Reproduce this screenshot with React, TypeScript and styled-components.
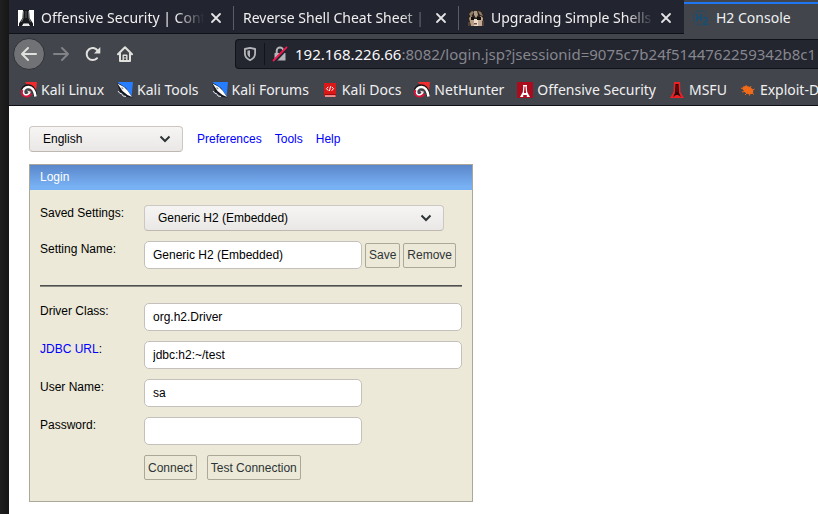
import React from "react";
import styled, { createGlobalStyle } from "styled-components";

const GlobalStyle = createGlobalStyle`
  *, *::before, *::after { box-sizing: border-box; }
  body { margin: 0; background: #ffffff; }
`;

const uiFont = `"Noto Sans", sans-serif`;
const pageFont = `"Liberation Sans", Arial, sans-serif`;

const Desktop = styled.div`
  display: flex;
  min-height: 100vh;
`;
const Edge = styled.div`
  flex: 0 0 9px;
  background: linear-gradient(90deg, #202020, #161616);
`;
const Window = styled.div`
  flex: 1;
  min-width: 0;
  display: flex;
  flex-direction: column;
`;
const Chrome = styled.header`
  overflow: hidden;
  background: #42454c;
  border-bottom: 1px solid #0f1014;
  font: 14px/20px ${uiFont};
  color: #f0f0f1;
`;

/* Tab strip */
const TabStrip = styled.div`
  display: flex;
  height: 34px;
  background: #22242f;
`;
const Tab = styled.div<{ $active?: boolean; $divided?: boolean }>`
  flex: 0 0 225px;
  min-width: 0;
  display: flex;
  align-items: center;
  gap: 7px;
  padding: 2px 9px 0;
  position: relative;
  background: ${(p) => (p.$active ? "#42454c" : "transparent")};
  border-bottom: 1px solid ${(p) => (p.$active ? "#42454c" : "#0f1118")};
  svg {
    flex: none;
  }
  &::before {
    content: "";
    position: absolute;
    left: 0;
    right: 0;
    top: 2px;
    height: ${(p) => (p.$active ? "2px" : "0")};
    background: #1f76f2;
  }
  &::after {
    content: "";
    position: absolute;
    right: 0;
    top: 6px;
    bottom: 3px;
    width: ${(p) => (p.$divided ? "1px" : "0")};
    background: #5c5e66;
  }
`;
const TabTitle = styled.span<{ $fade?: boolean }>`
  flex: 1;
  min-width: 0;
  margin-right: -4px;
  overflow: hidden;
  white-space: nowrap;
  mask-image: ${(p) =>
    p.$fade ? "linear-gradient(90deg, #000 calc(100% - 28px), transparent)" : "none"};
`;
const TabClose = styled.button`
  display: flex;
  padding: 3px;
  border: 0;
  background: none;
  color: #e4e4e6;
`;

/* Navigation */
const NavBar = styled.nav`
  display: flex;
  align-items: center;
  height: 40px;
  padding-left: 4px;
`;
const NavButton = styled.button<{ $round?: boolean; $dim?: boolean }>`
  flex: 0 0 32px;
  height: 32px;
  display: flex;
  align-items: center;
  justify-content: center;
  padding: 0;
  border: ${(p) => (p.$round ? "1px solid #2f3137" : "0")};
  border-radius: 50%;
  background: ${(p) => (p.$round ? "#717276" : "transparent")};
  color: ${(p) => (p.$dim ? "#808286" : "#e0e0dc")};
`;
const AddressBar = styled.div`
  flex: 1;
  min-width: 0;
  display: flex;
  align-items: center;
  height: 30px;
  margin-left: 94px;
  padding-left: 6px;
  background: #23252f;
  border: 1px solid #111318;
  border-right: 0;
  border-radius: 4px 0 0 4px;
  font-size: 15px;
`;
const AddressIcon = styled.span<{ $divided?: boolean }>`
  flex: none;
  display: flex;
  align-items: center;
  height: 22px;
  padding-right: ${(p) => (p.$divided ? "6px" : "0")};
  margin-right: 7px;
  border-right: ${(p) => (p.$divided ? "1px solid #111318" : "0")};
`;
const Host = styled.label`
  color: #f9f9fa;
`;
const AddressInput = styled.input`
  flex: 1;
  min-width: 0;
  padding: 0;
  border: 0;
  outline: 0;
  background: none;
  font: inherit;
  color: #86878e;
`;

/* Bookmarks */
const Bookmarks = styled.nav`
  display: flex;
  align-items: center;
  gap: 13px;
  height: 31px;
  padding: 0 0 0 12px;
`;
const Bookmark = styled.a`
  flex: none;
  display: flex;
  align-items: center;
  gap: 4px;
  color: #f0f0f1;
  text-decoration: none;
  white-space: nowrap;
`;

/* Page */
const Page = styled.main`
  flex: 1;
  padding: 20px 20px 12px;
  background: #ffffff;
  color: #000000;
  font: 12px/16px ${pageFont};
`;
const TopRow = styled.div`
  display: flex;
  align-items: center;
  gap: 14px;
  margin-bottom: 12px;
`;
const Links = styled.nav`
  display: flex;
  gap: 13px;
`;
const Link = styled.a`
  color: #0000ff;
  text-decoration: none;
`;
const SelectBox = styled.div<{ $width: number }>`
  position: relative;
  width: ${(p) => p.$width}px;
  max-width: 100%;
  svg {
    position: absolute;
    right: 12px;
    top: 9px;
    pointer-events: none;
  }
`;
const Select = styled.select`
  display: block;
  appearance: none;
  width: 100%;
  height: 26px;
  padding: 0 30px 0 13px;
  border: 1px solid #cdc7c2;
  border-bottom-color: #bfb8b1;
  border-radius: 4px;
  background: linear-gradient(#f6f5f4, #eae8e6);
  color: #000000;
  font: inherit;
`;
const Panel = styled.form`
  max-width: 444px;
  background: #ece9d8;
  border: 1px solid #aca899;
`;
const PanelTitle = styled.h1`
  margin: 0;
  padding: 4px 10px 5px;
  background: linear-gradient(#5a87ca, #78b0f4 85%);
  color: #ffffff;
  font: inherit;
`;
const Fields = styled.div`
  display: flex;
  flex-direction: column;
  gap: 10px;
  padding: 15px 10px 21px;
`;
const Row = styled.div`
  display: grid;
  grid-template-columns: 104px minmax(0, 1fr);
  align-items: start;
`;
const Controls = styled.div<{ $gap?: number }>`
  display: flex;
  align-items: center;
  gap: ${(p) => p.$gap ?? 3}px;
`;
const TextInput = styled.input<{ $wide?: boolean }>`
  width: ${(p) => (p.$wide ? "100%" : "218px")};
  height: 28px;
  padding: 0 8px;
  border: 1px solid #c4c1bd;
  border-radius: 5px;
  background: #ffffff;
  color: #000000;
  font: inherit;
`;
const Button = styled.button`
  height: 25px;
  padding: 0 3px;
  border: 1px solid #aca899;
  border-radius: 2px;
  background: #ece9d8;
  color: #2e3436;
  font: inherit;
  white-space: nowrap;
`;
const Rule = styled.hr`
  width: 100%;
  height: 2px;
  margin: 6px 0;
  border: 0;
  border-top: 1px solid #4f4f4f;
  background: #8a8982;
`;

const Chevron = () => (
  <svg width="12" height="8" viewBox="0 0 12 8" fill="none" stroke="#2e3436" strokeWidth="2">
    <path d="M1.5 1.5 6 6l4.5-4.5" />
  </svg>
);
const CloseIcon = () => (
  <svg width="12" height="12" viewBox="0 0 12 12" stroke="currentColor" strokeWidth="1.8" strokeLinecap="round">
    <path d="m2 2 8 8M10 2l-8 8" />
  </svg>
);
const ArrowIcon = ({ flip }: { flip?: boolean }) => (
  <svg width="16" height="16" viewBox="0 0 16 16" fill="none" stroke="currentColor" strokeWidth="2" strokeLinecap="round" strokeLinejoin="round">
    <path d={flip ? "M1 8h14M9 2l6 6-6 6" : "M15 8H1M7 2 1 8l6 6"} />
  </svg>
);
const ReloadIcon = () => (
  <svg width="16" height="16" viewBox="0 0 16 16">
    <path d="M12 12.2A6 6 0 1 1 12.6 4.6" fill="none" stroke="currentColor" strokeWidth="2" strokeLinecap="round" />
    <path d="M15.3 1v6.5H9z" fill="currentColor" />
  </svg>
);
const HomeIcon = () => (
  <svg width="16" height="16" viewBox="0 0 16 16" fill="none" stroke="currentColor" strokeWidth="2" strokeLinejoin="round" strokeLinecap="round">
    <path d="M1 8.2 8 1.3l7 6.9M3 7.5V15h10V7.5" />
    <path d="M6.2 14.5V9.2h3.6v5.3" strokeWidth="1.4" />
    <path d="M8 11.5v1" strokeWidth="1" />
  </svg>
);
const ShieldIcon = () => (
  <svg width="16" height="16" viewBox="0 0 16 16">
    <path d="M8 1.8 13.1 3v4.5c0 3-1.8 5.2-5.1 6.8-3.3-1.6-5.1-3.8-5.1-6.8V3z" fill="none" stroke="#b4b5b9" strokeWidth="1.8" strokeLinejoin="round" />
    <path d="M8 4.3v7.2c-1.7-1.1-2.6-2.4-2.6-4.1V4.8z" fill="#b4b5b9" />
  </svg>
);
const LockIcon = () => (
  <svg width="16" height="16" viewBox="0 0 16 16">
    <path d="M4.7 7V4.7a3.3 3.3 0 0 1 6.6 0V7" fill="none" stroke="#b4b5b9" strokeWidth="2" />
    <path d="M2.5 7h11v7.5h-11z" fill="#b4b5b9" />
    <path d="M2.6 15.4 15 2" stroke="#23252f" strokeWidth="3" />
    <path d="M1.5 14.5 14.5 1.3" stroke="#f2184f" strokeWidth="1.8" strokeLinecap="round" />
  </svg>
);
const OffsecTabIcon = () => (
  <svg width="16" height="16" viewBox="0 0 16 16">
    <path d="M0 0h16v16H0z" fill="#fff" />
    <path d="M5 0h6l.5 8 3.500 5.500V16h-3l-1.500-2.500h-5L4 16H1v-2.500L4.500 8z" fill="#17181c" />
    <path d="M5.500 1 5 8.500 3.500 12M10.500 1l.5 7.500 1.500 3.500" fill="none" stroke="#8e8f92" strokeWidth=".8" />
    <path d="M7.500 1h1v7h-1z" fill="#5d5e62" />
    <path d="M5 16l1-2h4l1 2z" fill="#e8e8e8" />
  </svg>
);
const FaceIcon = () => (
  <svg width="16" height="16" viewBox="0 0 16 16">
    <path d="M0 3 3 0h10l3 3v13H0z" fill="#2b2320" />
    <path d="M1 4l3-3 2 1-3 5zM10 1l3 1 2 4-3-1z" fill="#8d7b68" />
    <path d="M6 1h3l1 4-2 3-2-3z" fill="#b09a84" />
    <path d="M1 8l2-2 3 2v8H3z" fill="#b79c86" />
    <path d="M10 8l3-2 2 2-1 8h-4z" fill="#c4aa94" />
    <path d="M6 9h4v7H6z" fill="#ecdccd" />
    <path d="M3 7h3v3H3zM9 7h4v3H9z" fill="#120e0c" />
    <path d="M6 13h3v1.500H6z" fill="#6b4f45" />
    <path d="M0 12h2v4H0zM14 11h2v5h-2z" fill="#51413a" />
  </svg>
);
const H2Icon = () => (
  <svg width="16" height="16" viewBox="0 0 16 16" fill="none" stroke="#164f76">
    <path d="M14 4.500A7.300 7.300 0 1 0 8 15.300" strokeWidth=".7" />
    <path d="M4 4v7.500M8 4v7.500M4 7.700h4" strokeWidth="1.700" />
    <path d="M10.300 8.800c.5-1.800 4.200-1.600 4.200.4 0 1.800-3.600 2.900-4.200 5h5" strokeWidth="1.600" />
  </svg>
);
const HookIcon = () => (
  <svg width="16" height="16" viewBox="0 0 16 16">
    <path d="M4 0h12l-1.500 13L9 7z" fill="#f02c2e" />
    <path d="M14.500 14C13.500 7.500 10.500 4.300 7 4.300 3.500 4.300 1.500 7 1.500 10" fill="none" stroke="#1b1417" strokeWidth="4" />
    <path d="M14.500 14.500C13.500 8 11 5 7.500 5 4 5 1.800 7.500 2 10.500" fill="none" stroke="#fff" strokeWidth="2.600" />
    <path d="M1.200 8C.2 12 2.500 14.700 6 14.500c1.800-.1 3.500-1.200 4.300-2.700" fill="none" stroke="#d8143a" strokeWidth="2.200" />
    <path d="M2.500 10c0 2.300 1.500 3.200 3.500 2.700 1.200-.3 2.200-1 2.700-2" fill="none" stroke="#fff" strokeWidth="1.500" />
    <path d="m6 8.500 4 1.200-1.500 2.600-1-1.600z" fill="#f6e4e8" />
  </svg>
);
const KnifeIcon = () => (
  <svg width="16" height="16" viewBox="0 0 16 16">
    <path d="M1 0h15l-1.500 15L5 11z" fill="#267dff" />
    <path d="M0 1 3 2l6 4 6.500 9.500L10 15 3 9.500z" fill="#15171c" />
    <path d="m.5 1.500 6.500 3.500 3.500 3.500L15 15l-4.500-2L5.500 9z" fill="#fff" />
    <path d="m4.500 5 2 1-.5 1.500-1.500-1z" fill="#8a909e" />
    <path d="m1 9 2 2.500 1.500 0 1.500 2.500 3 .5" fill="none" stroke="#dfe4ee" strokeWidth="1" />
  </svg>
);
const DocsIcon = () => (
  <svg width="16" height="16" viewBox="0 0 16 16">
    <path d="M2 1h12v14H3.500L2 13.500z" fill="#dc1717" />
    <path d="M2.500 12.700h11.500" stroke="#8e0a0a" strokeWidth="1" />
    <path d="M3 14h10.500" stroke="#fff" strokeWidth="1" />
    <path d="M6.300 4.800 4.500 6.700l1.800 2M9.700 4.800l1.800 1.900-1.800 2M8.600 4.300 7.400 9" fill="none" stroke="#fff" strokeWidth="1" />
  </svg>
);
const OffsecIcon = () => (
  <svg width="16" height="16" viewBox="0 0 16 16">
    <path d="M0 0h16v16H0z" fill="#aa0c1e" />
    <path d="M6 3h4v1h-.3l.5 6 2.800 5H9.800V13H6.200v2H3l2.800-5 .5-6H6z" fill="#fff" />
    <path d="M7.500 4.500h1l.5 6.500H7z" fill="#aa0c1e" />
  </svg>
);
const MsfuIcon = () => (
  <svg width="16" height="16" viewBox="0 0 16 16">
    <path d="M5 0h6l.5 10 3.500 6H1l3.500-6z" fill="#ed2024" />
    <path d="M6.500 2h3l.5 9 2 4-3-2H7l-3 2 2-4z" fill="#26090b" />
    <path d="M8 3v7" stroke="#7c1518" />
  </svg>
);
const BugIcon = () => (
  <svg width="16" height="16" viewBox="0 0 16 16">
    <path d="M2.500 5C6 3 10.500 4.500 13 8c1 2.500-.5 4.500-3.500 4.200C6 12 3 9.500 2.500 5z" fill="#f06a17" />
    <path d="M4 7.500 1 6M5 9.500l-3 .5M7 11l-2 2M6.500 5 6 3M10 6l1-2M12 8l2.500-1M12 11l2 1.500M9 11l.5 2.500" stroke="#f06a17" strokeWidth="1" />
  </svg>
);

const tabs = [
  { title: "Offensive Security | Contr", Icon: OffsecTabIcon, divided: true },
  { title: "Reverse Shell Cheat Sheet | p", divided: true },
  { title: "Upgrading Simple Shells t", Icon: FaceIcon },
  { title: "H2 Console", Icon: H2Icon, active: true },
];
const bookmarks = [
  { label: "Kali Linux", Icon: HookIcon },
  { label: "Kali Tools", Icon: KnifeIcon },
  { label: "Kali Forums", Icon: KnifeIcon },
  { label: "Kali Docs", Icon: DocsIcon },
  { label: "NetHunter", Icon: HookIcon },
  { label: "Offensive Security", Icon: OffsecIcon },
  { label: "MSFU", Icon: MsfuIcon },
  { label: "Exploit-DB", Icon: BugIcon },
];

export default function App() {
  return (
    <Desktop>
      <GlobalStyle />
      <Edge />
      <Window>
        <Chrome>
          <TabStrip>
            {tabs.map(({ title, Icon, active, divided }) => (
              <Tab key={title} $active={active} $divided={divided}>
                {Icon && <Icon />}
                <TabTitle $fade={!active}>{title}</TabTitle>
                <TabClose type="button" aria-label="Close tab">
                  <CloseIcon />
                </TabClose>
              </Tab>
            ))}
          </TabStrip>
          <NavBar>
            <NavButton type="button" aria-label="Back" $round><ArrowIcon /></NavButton>
            <NavButton type="button" aria-label="Forward" $dim><ArrowIcon flip /></NavButton>
            <NavButton type="button" aria-label="Reload"><ReloadIcon /></NavButton>
            <NavButton type="button" aria-label="Home"><HomeIcon /></NavButton>
            <AddressBar>
              <AddressIcon $divided><ShieldIcon /></AddressIcon>
              <AddressIcon><LockIcon /></AddressIcon>
              <Host htmlFor="address">192.168.226.66</Host>
              <AddressInput id="address" defaultValue=":8082/login.jsp?jsessionid=9075c7b24f5144762259342b8c1" />
            </AddressBar>
          </NavBar>
          <Bookmarks>
            {bookmarks.map(({ label, Icon }) => (
              <Bookmark key={label} href="#">
                <Icon />
                {label}
              </Bookmark>
            ))}
          </Bookmarks>
        </Chrome>
        <Page>
          <TopRow>
            <SelectBox $width={154}>
              <Select aria-label="Language" defaultValue="English">
                <option>English</option>
              </Select>
              <Chevron />
            </SelectBox>
            <Links>
              <Link href="#">Preferences</Link>
              <Link href="#">Tools</Link>
              <Link href="#">Help</Link>
            </Links>
          </TopRow>
          <Panel onSubmit={(e) => e.preventDefault()}>
            <PanelTitle>Login</PanelTitle>
            <Fields>
              <Row>
                <label htmlFor="saved">Saved Settings:</label>
                <SelectBox $width={300}>
                  <Select id="saved" defaultValue="Generic H2 (Embedded)">
                    <option>Generic H2 (Embedded)</option>
                  </Select>
                  <Chevron />
                </SelectBox>
              </Row>
              <Row>
                <label htmlFor="name">Setting Name:</label>
                <Controls>
                  <TextInput id="name" defaultValue="Generic H2 (Embedded)" />
                  <Button type="button">Save</Button>
                  <Button type="button">Remove</Button>
                </Controls>
              </Row>
              <Rule />
              <Row>
                <label htmlFor="driver">Driver Class:</label>
                <TextInput id="driver" $wide defaultValue="org.h2.Driver" />
              </Row>
              <Row>
                <label htmlFor="url"><Link href="#">JDBC URL</Link>:</label>
                <TextInput id="url" $wide defaultValue="jdbc:h2:~/test" />
              </Row>
              <Row>
                <label htmlFor="user">User Name:</label>
                <TextInput id="user" defaultValue="sa" />
              </Row>
              <Row>
                <label htmlFor="password">Password:</label>
                <TextInput id="password" type="password" />
              </Row>
              <Row>
                <span />
                <Controls $gap={10}>
                  <Button type="submit">Connect</Button>
                  <Button type="button">Test Connection</Button>
                </Controls>
              </Row>
            </Fields>
          </Panel>
        </Page>
      </Window>
    </Desktop>
  );
}
